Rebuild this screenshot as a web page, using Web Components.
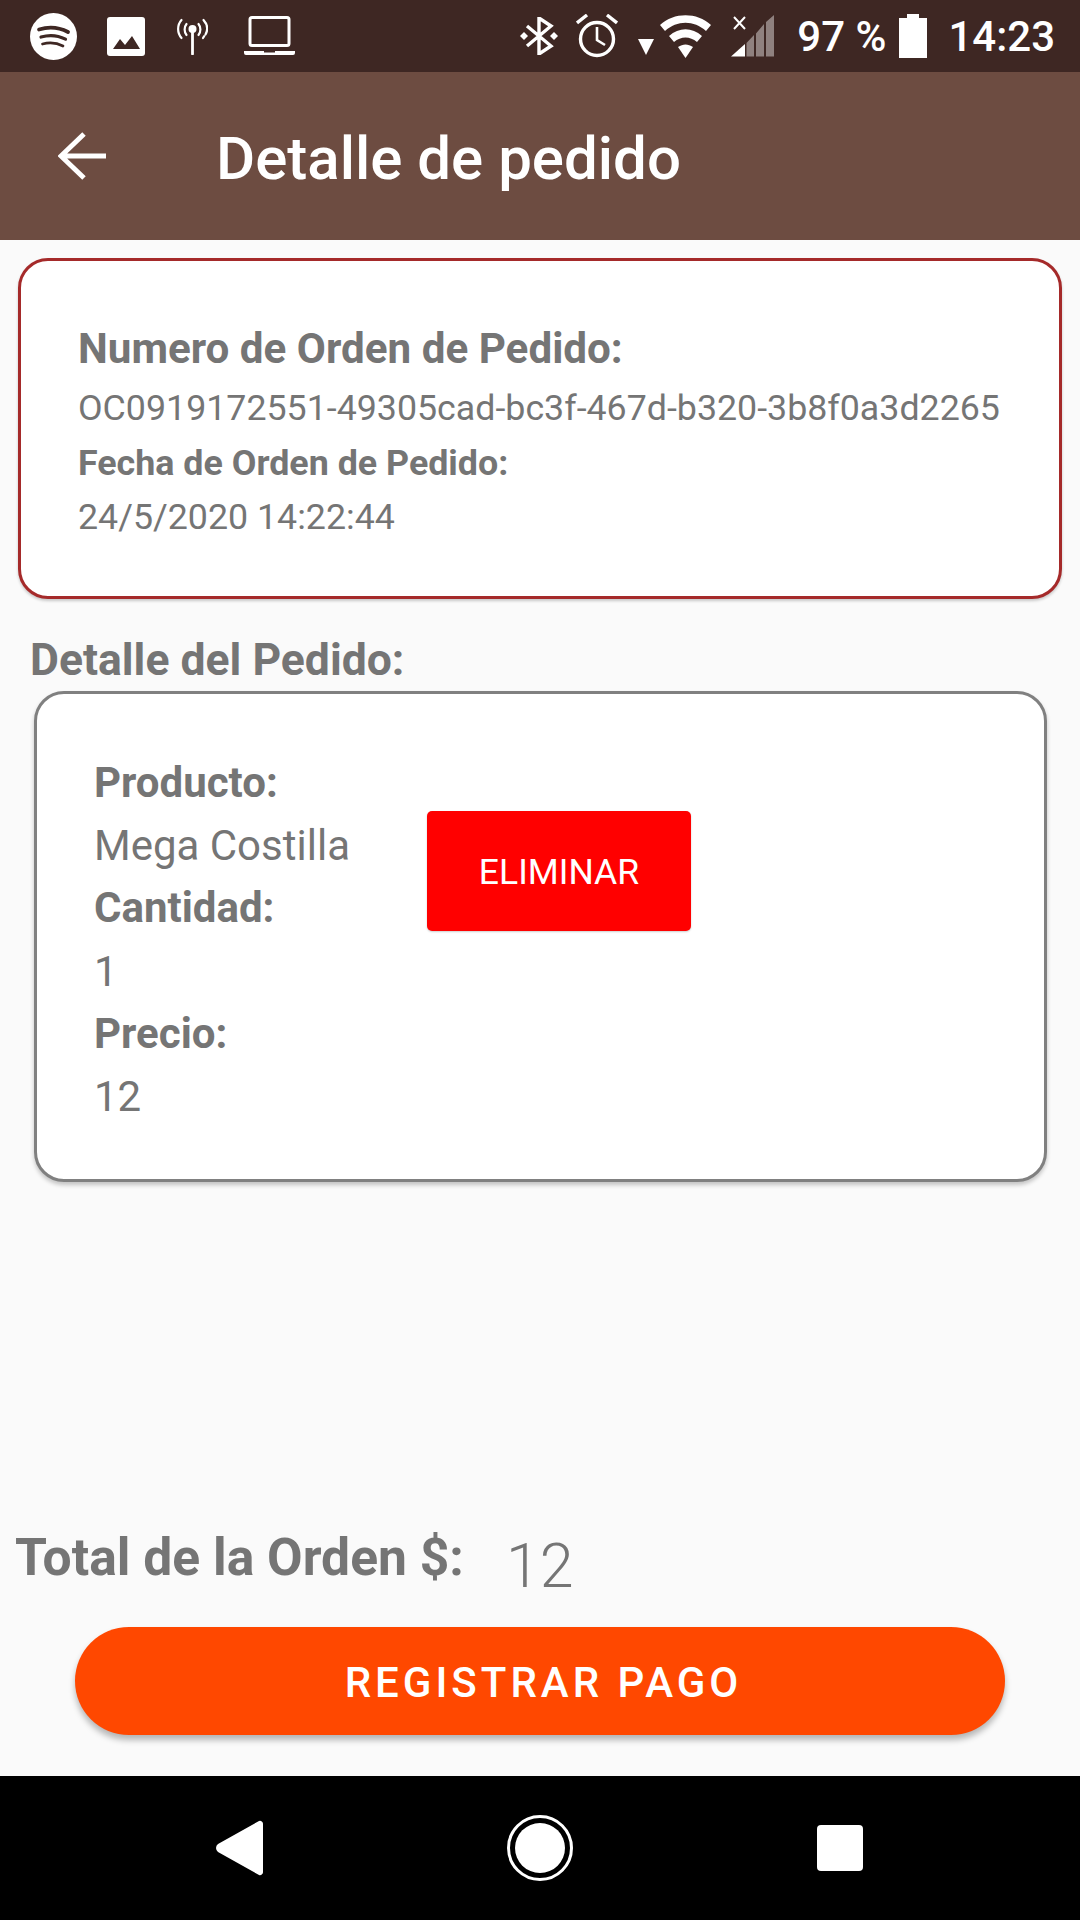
<!DOCTYPE html>
<html lang="es">
<head>
<meta charset="utf-8">
<title>Detalle de pedido</title>
<style>
html, body { margin: 0; padding: 0; }
body { width: 1080px; height: 1920px; background: #fafafa; font-family: Roboto, "Liberation Sans", sans-serif; overflow: hidden; }
order-screen { height: 1920px; }
</style>
</head>
<body>
<order-screen>
  <status-bar></status-bar>
  <app-bar title="Detalle de pedido"></app-bar>
  <info-card>
    <field-line kind="label" size="42.2" height="60">Numero de Orden de Pedido:</field-line>
    <field-line size="35.75" height="58">OC0919172551-49305cad-bc3f-467d-b320-3b8f0a3d2265</field-line>
    <field-line kind="label" size="35.8" height="52">Fecha de Orden de Pedido:</field-line>
    <field-line size="35.75" height="56">24/5/2020 14:22:44</field-line>
  </info-card>
  <section-title>Detalle del Pedido:</section-title>
  <item-card>
    <field-line kind="label" size="42" height="63">Producto:</field-line>
    <field-line size="42" height="63">Mega Costilla</field-line>
    <field-line kind="label" size="42" height="62.5">Cantidad:</field-line>
    <field-line size="42" height="63">1</field-line>
    <field-line kind="label" size="42" height="62.5">Precio:</field-line>
    <field-line size="42" height="63">12</field-line>
    <delete-button slot="action">ELIMINAR</delete-button>
  </item-card>
  <order-total value="12"></order-total>
  <pay-button>REGISTRAR PAGO</pay-button>
  <nav-bar></nav-bar>
</order-screen>

<script>
const define = (name, html, attrs) => {
    const template = document.createElement("template");
    template.innerHTML = html;
    window.customElements.define(name, class extends HTMLElement {
        constructor() {
            super();
            this.attachShadow({ mode: "open" });
            this.shadowRoot.appendChild(template.content.cloneNode(true));
        }
        connectedCallback() {
            if (attrs) attrs(this, this.shadowRoot);
        }
    });
};

define("order-screen", `
<style>
:host { display: flex; flex-direction: column; width: 1080px; }
</style>
<slot></slot>
`);

define("status-bar", `
<style>
:host { display: flex; align-items: center; justify-content: space-between; box-sizing: border-box; height: 72px; padding: 0 25px 0 30px; background: #3e2723; color: #fff; font: 500 42px Roboto, sans-serif; }
.group { display: flex; align-items: center; }
svg { display: block; flex: none; }
span { white-space: nowrap; line-height: 72px; padding-top: 2px; }
</style>
<div class="group">
  <svg width="47" height="47" viewBox="0 0 47 47" style="margin-right:30px">
    <circle cx="23.5" cy="23.5" r="23.500" fill="#fff"/>
    <g fill="none" stroke="#3e2723" stroke-linecap="round">
      <path d="M9 16.500c9-2.800 20-2.200 29 2.500" stroke-width="3.800"/>
      <path d="M11 24c8-2.300 17-1.700 24.500 2.200" stroke-width="3.200"/>
      <path d="M12.500 31c7-1.800 14-1.300 20.500 2" stroke-width="2.700"/>
    </g>
  </svg>
  <svg width="38" height="39" viewBox="0 0 38 39" style="margin-right:32px">
    <rect width="38" height="39" rx="3" fill="#fff"/>
    <path d="M6 32l7-10 5 6 7-9 8 13z" fill="#3e2723"/>
  </svg>
  <svg width="31" height="38" viewBox="0 0 31 38" style="margin-right:36px">
    <g fill="none" stroke="#fff" stroke-width="2.200" stroke-linecap="round">
      <path d="M15.500 14v23" stroke-width="2.800"/>
      <path d="M9.500 18c-2.500-3-2.500-8 0-11"/>
      <path d="M21.500 7c2.500 3 2.500 8 0 11"/>
      <path d="M4.500 21c-4.500-5-4.500-13 0-18"/>
      <path d="M26.500 3c4 4.500 4.500 10 2 14.500"/>
      <path d="M26 21l1.200-1.800"/>
    </g>
    <circle cx="15.500" cy="12" r="4" fill="#fff"/>
  </svg>
  <svg width="51" height="40" viewBox="0 0 51 40">
    <rect x="6" y="1.500" width="39" height="28" rx="2" fill="none" stroke="#fff" stroke-width="3"/>
    <path d="M0 35h20v1.500h11V35h20v2a2 2 0 0 1-2 2H2a2 2 0 0 1-2-2z" fill="#fff"/>
  </svg>
</div>
<div class="group">
  <svg width="38" height="38" viewBox="0 0 38 38" style="margin-right:18px">
    <g fill="none" stroke="#fff" stroke-width="3.400">
      <path d="M7 9l24 20-12 8V1l12 8L7 29"/>
    </g>
    <path d="M0 19l4-4 4 4-4 4zM30 19l4-4 4 4-4 4z" fill="#fff"/>
  </svg>
  <svg width="42" height="44" viewBox="0 0 42 44" style="margin-right:20px">
    <circle cx="21" cy="25" r="16.500" fill="none" stroke="#fff" stroke-width="3.400"/>
    <path d="M21 13v13l8 5" fill="none" stroke="#fff" stroke-width="2.600"/>
    <path d="M1 9l10-8M41 9L31 1" fill="none" stroke="#fff" stroke-width="3.400"/>
  </svg>
  <svg width="16" height="16" viewBox="0 0 16 16" style="margin:22px 6px 0 0">
    <path d="M0 0h16L8 16z" fill="#fff"/>
  </svg>
  <svg width="51" height="43" viewBox="0 0 51 43" style="margin-right:20px">
    <path d="M0 10C14-3 37-3 51 10l-5 6C34 5 17 5 5 16z" fill="#fff"/>
    <path d="M9 21c10-9 23-9 33 0l-5 6c-7-6-16-6-23 0z" fill="#fff"/>
    <path d="M18 32c5-3.500 10-3.500 15 0l-7.500 11z" fill="#fff"/>
  </svg>
  <svg width="43" height="42" viewBox="0 0 43 42" style="margin-right:23px">
    <path d="M0 41.500L14 29v12.500z" fill="#fff"/>
    <path d="M15.500 28L23 20v21.500h-7.500zM25 18.500L33 9v32.500h-8zM35 7l8-7v41.500h-8z" fill="#fff" fill-opacity=".42"/>
    <path d="M3 2l11 12M14 2L3 14" fill="none" stroke="#fff" stroke-width="2"/>
  </svg>
  <span style="margin-right:13px">97 %</span>
  <svg width="28" height="44" viewBox="0 0 28 44" style="margin-right:21px">
    <path d="M8 0h12v4h8v40H0V4h8z" fill="#fff"/>
  </svg>
  <span>14:23</span>
</div>
`);

define("app-bar", `
<style>
:host { display: flex; align-items: center; box-sizing: border-box; height: 168px; padding-left: 58px; background: #6d4c41; color: #fff; }
svg { display: block; flex: none; margin-right: 110px; }
h1 { margin: 0; padding-top: 5px; font: 500 60px Roboto, sans-serif; }
</style>
<svg width="48" height="48" viewBox="0 0 48 48">
  <path d="M48 24H3M26 2L3 24l23 22" fill="none" stroke="#fff" stroke-width="5"/>
</svg>
<h1></h1>
`, (el, root) => { root.querySelector("h1").textContent = el.getAttribute("title"); });

define("field-line", `
<style>
:host { display: block; white-space: nowrap; color: #757575; }
</style>
<slot></slot>
`, (el) => {
    const size = el.getAttribute("size");
    el.style.fontSize = size + "px";
    el.style.fontWeight = el.getAttribute("kind") === "label" ? "700" : "400";
    el.style.lineHeight = (el.getAttribute("height") || 55) + "px";
});

define("info-card", `
<style>
:host { display: block; box-sizing: border-box; width: 1044px; height: 341px; margin: 18px 0 0 18px; padding: 58px 0 0 57px; background: #fff; border: 3px solid #a52a2a; border-radius: 30px; box-shadow: 0 2px 3px rgba(0,0,0,.2); }
</style>
<slot></slot>
`);

define("section-title", `
<style>
:host { display: block; margin: 32px 0 0 30px; height: 60px; color: #757575; font: 700 44.500px/58px Roboto, sans-serif; }
</style>
<slot></slot>
`);

define("item-card", `
<style>
:host { display: flex; box-sizing: border-box; width: 1013px; height: 491px; margin: 0 0 0 34px; padding: 57px 0 0 57px; background: #fff; border: 3px solid #808080; border-radius: 30px; box-shadow: 0 3px 4px rgba(0,0,0,.22); }
.fields { width: 333px; }
.action { padding-top: 60px; }
</style>
<div class="fields"><slot></slot></div>
<div class="action"><slot name="action"></slot></div>
`);

define("delete-button", `
<style>
:host { display: flex; align-items: center; justify-content: center; box-sizing: border-box; width: 264px; height: 120px; padding-top: 2px; background: #f00; color: #fff; border-radius: 5px; font: 400 35.5px Roboto, sans-serif; box-shadow: 0 1px 2px rgba(0,0,0,.2); }
</style>
<slot></slot>
`);

define("order-total", `
<style>
:host { display: flex; align-items: flex-start; margin-top: 326px; padding-left: 15px; height: 100px; color: #757575; }
.label { font: 700 51.6px/100px Roboto, sans-serif; }
.value { font: 300 61px/117px Roboto, sans-serif; margin-left: 42px; }
</style>
<span class="label">Total de la Orden $:</span>
<span class="value"></span>
`, (el, root) => { root.querySelector(".value").textContent = el.getAttribute("value"); });

define("pay-button", `
<style>
:host { display: flex; align-items: center; justify-content: center; box-sizing: border-box; width: 930px; height: 108px; margin: 19px 0 0 75px; padding: 2px 0 0 7px; background: #ff4800; color: #fff; border-radius: 54px; font: 500 42px Roboto, sans-serif; letter-spacing: 4px; box-shadow: 0 5px 6px rgba(0,0,0,.28); }
</style>
<slot></slot>
`);

define("nav-bar", `
<style>
:host { display: flex; align-items: center; box-sizing: border-box; height: 144px; margin-top: 41px; padding-left: 216px; background: #000; }
svg { display: block; flex: none; }
</style>
<svg width="48" height="58" viewBox="0 0 48 58" style="margin-right:243px">
  <path d="M2 25L43 2a3 3 0 0 1 4 3v48a3 3 0 0 1-4 3L2 33a5 5 0 0 1 0-8z" fill="#fff"/>
</svg>
<svg width="66" height="66" viewBox="0 0 66 66" style="margin-right:244px">
  <circle cx="33" cy="33" r="31.500" fill="none" stroke="#fff" stroke-width="3"/>
  <circle cx="33" cy="33" r="25" fill="#fff"/>
</svg>
<svg width="46" height="46" viewBox="0 0 46 46">
  <rect width="46" height="46" rx="4" fill="#fff"/>
</svg>
`);
</script>
</body>
</html>
